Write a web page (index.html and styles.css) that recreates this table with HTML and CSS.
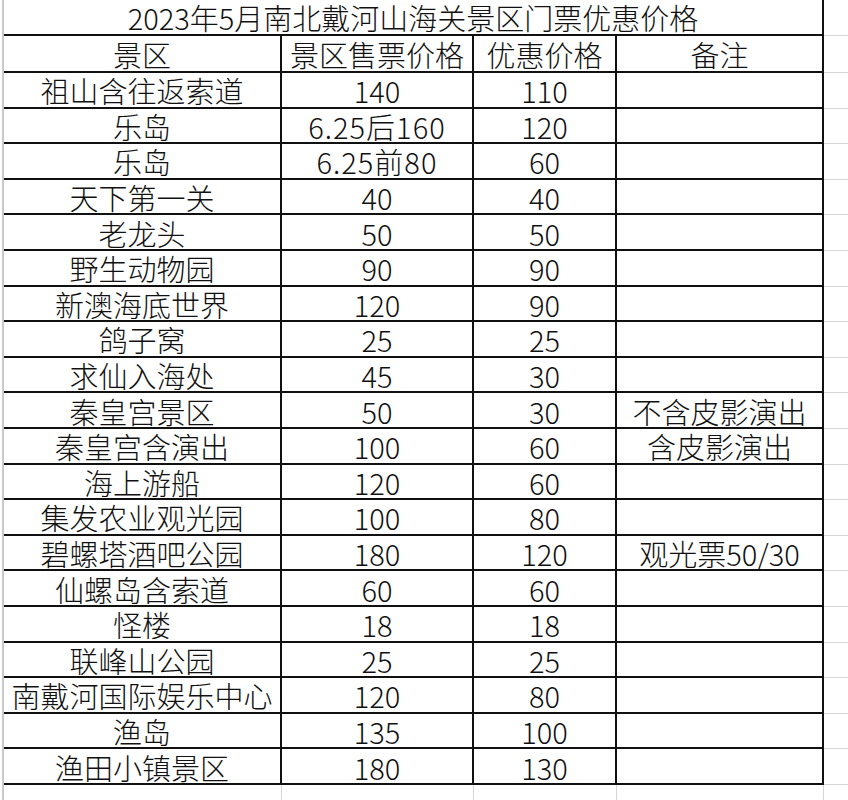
FILE: index.html
```html
<!DOCTYPE html>
<html lang="zh-CN">
<head>
<meta charset="utf-8">
<title>2023年5月南北戴河山海关景区门票优惠价格</title>
<link rel="stylesheet" href="styles.css">
</head>
<body>
<div class="sheet">
  <div class="grid">
    <div class="c title span4">2023年5月南北戴河山海关景区门票优惠价格</div><div class="g"></div>
    <div class="c">景区</div><div class="c">景区售票价格</div><div class="c">优惠价格</div><div class="c">备注</div><div class="g"></div>
    <div class="c">祖山含往返索道</div><div class="c">140</div><div class="c">110</div><div class="c"></div><div class="g"></div>
    <div class="c">乐岛</div><div class="c wide">6.25后160</div><div class="c">120</div><div class="c"></div><div class="g"></div>
    <div class="c">乐岛</div><div class="c wide">6.25前80</div><div class="c">60</div><div class="c"></div><div class="g"></div>
    <div class="c">天下第一关</div><div class="c">40</div><div class="c">40</div><div class="c"></div><div class="g"></div>
    <div class="c">老龙头</div><div class="c">50</div><div class="c">50</div><div class="c"></div><div class="g"></div>
    <div class="c">野生动物园</div><div class="c">90</div><div class="c">90</div><div class="c"></div><div class="g"></div>
    <div class="c">新澳海底世界</div><div class="c">120</div><div class="c">90</div><div class="c"></div><div class="g"></div>
    <div class="c">鸽子窝</div><div class="c">25</div><div class="c">25</div><div class="c"></div><div class="g"></div>
    <div class="c">求仙入海处</div><div class="c">45</div><div class="c">30</div><div class="c"></div><div class="g"></div>
    <div class="c">秦皇宫景区</div><div class="c">50</div><div class="c">30</div><div class="c">不含皮影演出</div><div class="g"></div>
    <div class="c">秦皇宫含演出</div><div class="c">100</div><div class="c">60</div><div class="c">含皮影演出</div><div class="g"></div>
    <div class="c">海上游船</div><div class="c">120</div><div class="c">60</div><div class="c"></div><div class="g"></div>
    <div class="c">集发农业观光园</div><div class="c">100</div><div class="c">80</div><div class="c"></div><div class="g"></div>
    <div class="c">碧螺塔酒吧公园</div><div class="c">180</div><div class="c">120</div><div class="c">观光票50/30</div><div class="g"></div>
    <div class="c">仙螺岛含索道</div><div class="c">60</div><div class="c">60</div><div class="c"></div><div class="g"></div>
    <div class="c">怪楼</div><div class="c">18</div><div class="c">18</div><div class="c"></div><div class="g"></div>
    <div class="c">联峰山公园</div><div class="c">25</div><div class="c">25</div><div class="c"></div><div class="g"></div>
    <div class="c">南戴河国际娱乐中心</div><div class="c">120</div><div class="c">80</div><div class="c"></div><div class="g"></div>
    <div class="c">渔岛</div><div class="c">135</div><div class="c">100</div><div class="c"></div><div class="g"></div>
    <div class="c">渔田小镇景区</div><div class="c">180</div><div class="c">130</div><div class="c"></div><div class="g"></div>
    <div class="e"></div><div class="e"></div><div class="e"></div><div class="e"></div><div class="e last"></div>
  </div>
</div>
</body>
</html>
```

FILE: styles.css
```css
html, body {
  margin: 0;
  padding: 0;
  background: #ffffff;
}
body {
  width: 848px;
  height: 800px;
  overflow: hidden;
  font-family: "Noto Sans CJK SC", "Noto Sans", sans-serif;
  font-weight: 300;
  color: #111111;
}
.sheet {
  margin-left: 2px;
  border-left: 2px solid #c9c9c9;
  height: 800px;
}
.grid {
  display: grid;
  grid-template-columns: 278px 192px 143px 207px 24px;
  grid-template-rows: 36px 37px repeat(20, 35.6px) 20px;
}
.c {
  box-sizing: border-box;
  border-right: 2px solid #111111;
  border-bottom: 2px solid #111111;
  display: flex;
  align-items: center;
  justify-content: center;
  font-size: 29px;
  line-height: 1;
  white-space: nowrap;
  padding-top: 2px;
}
.wide {
  letter-spacing: 1px;
}
.span4 {
  grid-column: span 4;
}
.title {
  padding-top: 1px;
}
.g {
  border-bottom: 1px solid #d6d6d6;
}
.e {
  box-sizing: border-box;
  border-right: 1px solid #d6d6d6;
}
.e.last {
  border-right: none;
}
```
